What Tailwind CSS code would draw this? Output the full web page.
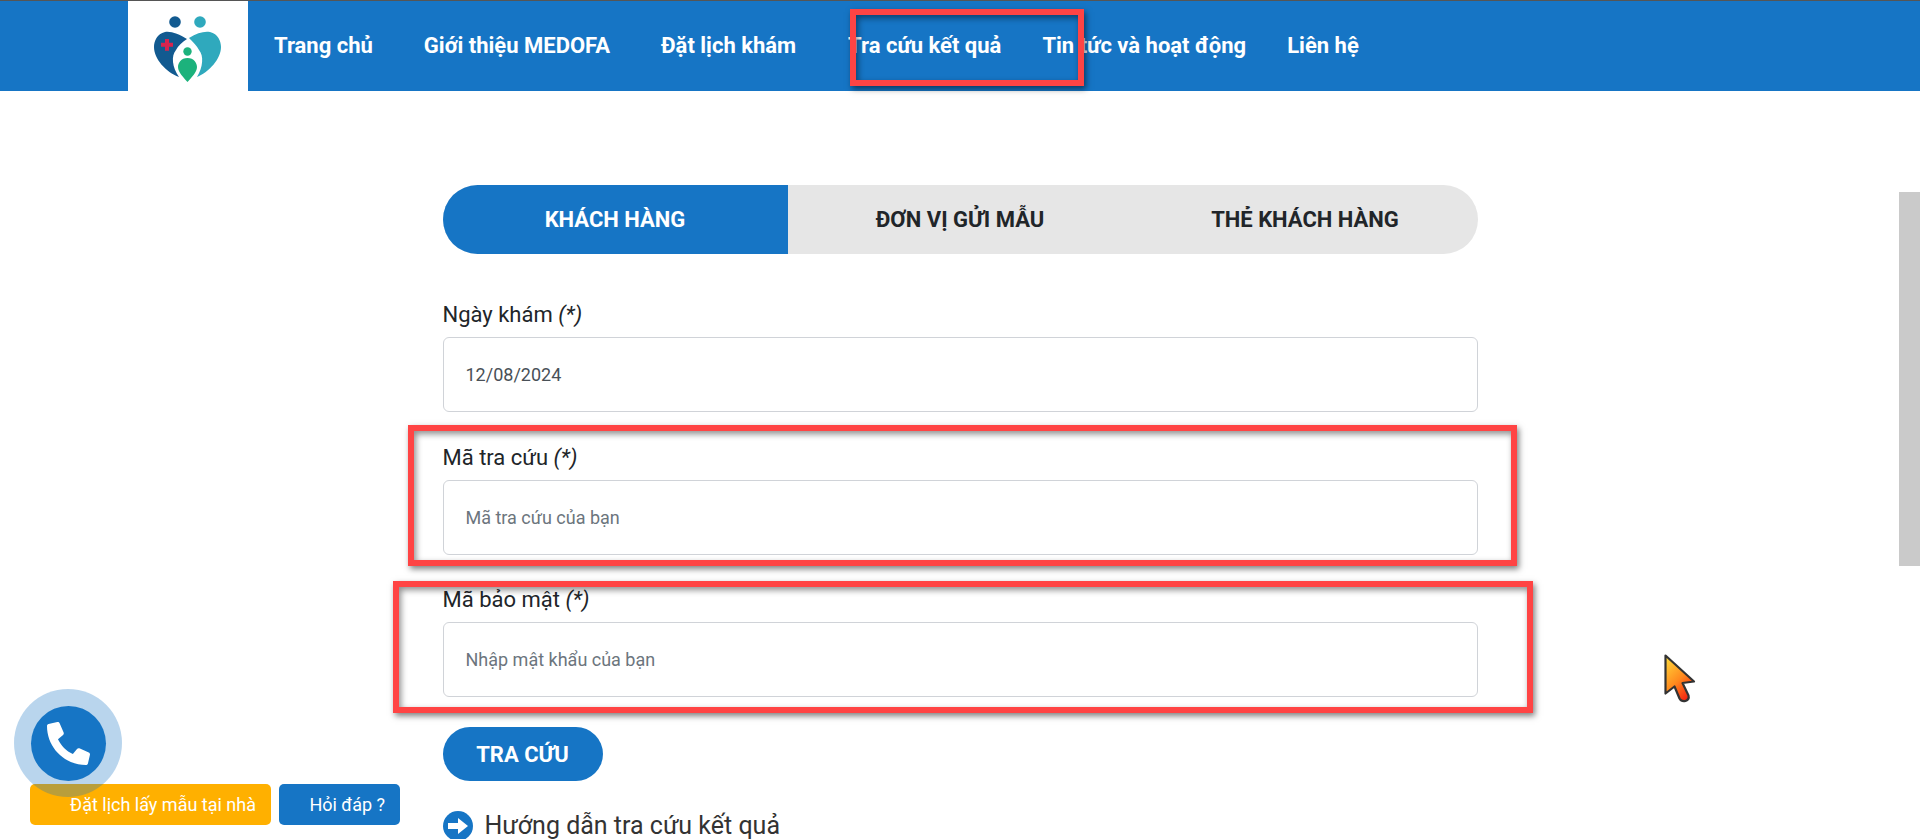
<!DOCTYPE html>
<html lang="vi">
<head>
<meta charset="utf-8">
<title>Tra cứu kết quả</title>
<script src="https://cdn.jsdelivr.net/npm/@tailwindcss/browser@4"></script>
</head>
<body class="bg-white">
<div class="relative h-[839px] w-[1920px] overflow-hidden bg-white font-['Roboto',sans-serif] text-[#212529]">

  <header class="flex h-[91px] items-stretch border-t border-[#555555] bg-[#1675c5] pl-[128px] text-[22px] font-bold text-white">
    <div class="flex w-[120px] items-start bg-white">
      <svg class="h-[90px] w-[120px]" viewBox="-2 0 120 90" aria-label="MEDOFA">
        <circle cx="45" cy="21" r="5.8" fill="#125a90"/>
        <circle cx="70" cy="21" r="5.8" fill="#2fa9bd"/>
        <path d="M57 38 C49 33 41 30 35 31 C27 33 24 40 24 46 C24 58 36 71 49 76 C42 66 41 55 46 49 C48 45 52 41 57 38Z" fill="#125a90"/>
        <path d="M59 37 C67 32 74 30 80 31 C88 33 91 40 91 46 C91 58 79 71 67 76 C73 66 74 55 69 49 C67 45 63 41 59 37Z" fill="#2fa9bd"/>
        <path d="M35 38h4v3.8h4v4h-4v4h-4v-4h-4v-4h4z" fill="#d8244f"/>
        <circle cx="57.5" cy="50.5" r="4.2" fill="#1cb27c"/>
        <path d="M57.5 57 C64 57 67 62 67 66 C67 71 61 77 57.5 81 C54 77 48 71 48 66 C48 62 51 57 57.5 57Z" fill="#1cb27c"/>
      </svg>
    </div>
    <nav class="flex items-center pb-[2px] pl-[26px]">
      <a class="whitespace-nowrap">Trang chủ</a>
      <a class="ml-[51px] whitespace-nowrap">Giới thiệu MEDOFA</a>
      <a class="ml-[51px] whitespace-nowrap">Đặt lịch khám</a>
      <a class="ml-[52px] whitespace-nowrap">Tra cứu kết quả</a>
      <a class="ml-[41px] whitespace-nowrap">Tin tức và hoạt động</a>
      <a class="ml-[41px] whitespace-nowrap">Liên hệ</a>
    </nav>
  </header>

  <main class="mx-auto w-[1035px] pt-[94px]">
    <div class="flex h-[69px] items-center overflow-hidden rounded-full bg-[#e6e6e6] text-[22px] font-bold">
      <div class="flex h-full w-[345px] items-center justify-center bg-[#1675c5] text-white">KHÁCH HÀNG</div>
      <div class="flex h-full w-[345px] items-center justify-center">ĐƠN VỊ GỬI MẪU</div>
      <div class="flex h-full w-[345px] items-center justify-center">THẺ KHÁCH HÀNG</div>
    </div>

    <form class="mt-[44px]">
      <label class="mb-[6px] block text-[22px] leading-[33px]">Ngày khám <em>(*)</em></label>
      <input class="mb-[28.5px] block h-[75px] w-full rounded-md border border-[#d0d3d8] px-[22px] text-[18px] text-[#495057] outline-none" value="12/08/2024">
      <label class="mb-[6px] block text-[22px] leading-[33px]">Mã tra cứu <em>(*)</em></label>
      <input class="mb-[28.5px] block h-[75px] w-full rounded-md border border-[#d0d3d8] px-[22px] text-[18px] outline-none placeholder:text-[#6c757d]" placeholder="Mã tra cứu của bạn">
      <label class="mb-[6px] block text-[22px] leading-[33px]">Mã bảo mật <em>(*)</em></label>
      <input class="mb-[30px] block h-[75px] w-full rounded-md border border-[#d0d3d8] px-[22px] text-[18px] outline-none placeholder:text-[#6c757d]" placeholder="Nhập mật khẩu của bạn">
      <button type="button" class="h-[54px] w-[160px] rounded-full bg-[#1675c5] text-[22px] font-bold text-white">TRA CỨU</button>
    </form>

    <a class="mt-[30px] flex items-center gap-[12px] text-[25px] leading-[30px] text-[#333333]">
      <svg class="h-[30px] w-[30px] shrink-0" viewBox="0 0 30 30">
        <circle cx="15" cy="15" r="15" fill="#1675c5"/>
        <path d="M5 12h10V7l10 8-10 8v-5H5z" fill="#ffffff"/>
      </svg>
      <span class="whitespace-nowrap">Hướng dẫn tra cứu kết quả</span>
    </a>
  </main>

  <!-- page scrollbar thumb -->
  <div class="absolute left-[1899px] top-[192px] h-[374px] w-[21px] bg-[#cacaca]"></div>

  <!-- annotation rectangles -->
  <div class="absolute left-[850px] top-[9px] h-[77px] w-[234px] border-[6px] border-[#ff4444] shadow-[2px_3px_6px_rgba(0,0,0,0.5),inset_2px_3px_6px_rgba(0,0,0,0.45)]"></div>
  <div class="absolute left-[408px] top-[425px] h-[141px] w-[1109px] border-[6px] border-[#ff4444] shadow-[2px_3px_6px_rgba(0,0,0,0.5),inset_2px_3px_6px_rgba(0,0,0,0.45)]"></div>
  <div class="absolute left-[393px] top-[581px] h-[132px] w-[1140px] border-[6px] border-[#ff4444] shadow-[2px_3px_6px_rgba(0,0,0,0.5),inset_2px_3px_6px_rgba(0,0,0,0.45)]"></div>

  <!-- floating buttons -->
  <div class="absolute left-[30px] top-[784px] flex gap-[8px] text-[18px] text-white">
    <a class="flex h-[41px] w-[241px] items-center justify-end rounded-[5px] bg-[#ffb000] pr-[15px]">Đặt lịch lấy mẫu tại nhà</a>
    <a class="flex h-[41px] w-[121px] items-center justify-end rounded-[5px] bg-[#1675c5] pr-[15px]">Hỏi đáp ?</a>
  </div>
  <div class="absolute left-[14px] top-[689px] flex h-[108px] w-[108px] items-center justify-center rounded-full bg-[#1675c5]/30">
    <div class="flex h-[75px] w-[75px] items-center justify-center rounded-full bg-[#1675c5]">
      <svg class="h-[43px] w-[43px]" viewBox="0 0 512 512">
        <path transform="translate(512 0) scale(-1 1)" fill="#ffffff" d="M493.4 24.6l-104-24c-11.3-2.6-22.9 3.3-27.5 13.9l-48 112c-4.2 9.8-1.4 21.3 6.9 28l60.6 49.6c-36 76.7-98.9 140.5-177.2 177.2l-49.6-60.6c-6.8-8.3-18.2-11.1-28-6.9l-112 48C3.9 366.5-2 378.1.6 389.4l24 104C27.1 504.2 36.7 512 48 512c256.1 0 464-207.5 464-464 0-11.2-7.7-20.9-18.6-23.4z"/>
      </svg>
    </div>
  </div>

  <!-- mouse pointer -->
  <svg class="absolute left-[1660px] top-[650px] h-[58px] w-[40px]" viewBox="0 0 40 58">
    <defs>
      <linearGradient id="cursorFill" x1="0.1" y1="0" x2="0.7" y2="1">
        <stop offset="0" stop-color="#ffd83a"/>
        <stop offset="0.55" stop-color="#ff8a1e"/>
        <stop offset="1" stop-color="#f5200f"/>
      </linearGradient>
    </defs>
    <path d="M5.5 5.5 L34 31.5 L22.5 33 L28.5 45.5 Q29.5 49.5 25.5 51 Q21.5 52 19.5 48.5 L14.5 36.5 L5.5 43.5Z" fill="url(#cursorFill)" stroke="#333333" stroke-width="2.2" stroke-linejoin="round"/>
  </svg>
</div>
</body>
</html>
